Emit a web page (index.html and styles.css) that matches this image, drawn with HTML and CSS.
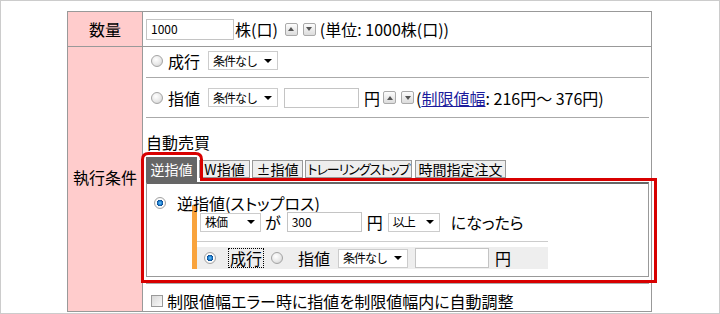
FILE: index.html
```html
<!DOCTYPE html>
<html lang="ja">
<head>
<meta charset="UTF-8">
<title>注文入力</title>
<link rel="stylesheet" href="styles.css">
</head>
<body>
<div class="frame">
    <div class="order">
        <div class="head head-qty">数量</div>
        <div class="cell cell-qty">
            <span class="text-box w-qty">1000</span>
            <span class="unit">株(口)</span>
            <span class="spin spin-up"></span>
            <span class="spin spin-down"></span>
            <span class="note">(単位: 1000株(口))</span>
        </div>

        <div class="head head-cond">執行条件</div>
        <div class="cell cell-cond">
            <div class="sub sub-market">
                <span class="radio"></span>
                <span class="lbl">成行</span>
                <span class="select w-cond">条件なし</span>
            </div>
            <div class="sub sub-limit">
                <span class="radio"></span>
                <span class="lbl">指値</span>
                <span class="select w-cond">条件なし</span>
                <span class="text-box w-price"></span>
                <span class="yen">円</span>
                <span class="spin spin-up"></span>
                <span class="spin spin-down"></span>
                <span class="note">(<a href="#" class="link">制限値幅</a>: 216円～ 376円)</span>
            </div>
            <div class="sub sub-auto">
                <div class="auto-title">自動売買</div>
                <div class="tabs">
                    <span class="tab on">逆指値</span>
                    <span class="tab t-w">W指値</span>
                    <span class="tab t-pm">±指値</span>
                    <span class="tab t-trail">トレーリングストップ</span>
                    <span class="tab t-time">時間指定注文</span>
                </div>
                <div class="panel">
                    <div class="stop-head">
                        <span class="radio checked"></span>
                        <span class="lbl">逆指値(ストップロス)</span>
                    </div>
                    <div class="stop-body">
                        <div class="stop-row trigger">
                            <span class="select w-base">株価</span>
                            <span class="ga">が</span>
                            <span class="text-box w-trig">300</span>
                            <span class="yen">円</span>
                            <span class="select w-cmp">以上</span>
                            <span class="then">になったら</span>
                        </div>
                        <div class="stop-row exec">
                            <span class="radio checked"></span>
                            <span class="lbl focus">成行</span>
                            <span class="radio"></span>
                            <span class="lbl">指値</span>
                            <span class="select w-cond">条件なし</span>
                            <span class="text-box w-price"></span>
                            <span class="yen">円</span>
                        </div>
                    </div>
                </div>
            </div>
            <div class="sub sub-adjust">
                <span class="check"></span>
                <span class="lbl">制限値幅エラー時に指値を制限値幅内に自動調整</span>
            </div>
        </div>
    </div>

    <!-- 注目枠 -->
    <svg class="mark" width="720" height="314" viewBox="0 0 720 314">
        <path d="M141.5 280.5 L141.5 158.5 Q141.5 152.5 147.5 152.5 L194.5 152.5 Q200.5 152.5 200.5 158.5 L200.5 178.5 L654.5 178.5 L654.5 280.5 Z" fill="none" stroke="#d80000" stroke-width="3"/>
    </svg>
</div>
</body>
</html>
```

FILE: styles.css
```css
*{
    margin:0;
    padding:0;
    box-sizing:border-box;
}
body{
    font-family:"Noto Sans CJK JP","Liberation Sans",sans-serif;
    font-size:16px;
    line-height:18px;
    font-feature-settings:"palt";
    color:#000;
    background:#fff;
}
.frame{
    position:relative;
    width:720px;
    height:314px;
    border:1px solid #ccc;
    padding:10px 0 0 66px;
}
.order{
    display:grid;
    grid-template-columns:75px 1fr;
    width:585px;
    border:1px solid #999;
}
.head{
    background:#fcc;
    border-right:1px solid #999;
    display:flex;
    align-items:center;
    justify-content:center;
}
.head-cond,.cell-cond{
    border-top:1px solid #999;
}
.head-cond{
    padding-bottom:5px;
}
.cell-qty{
    height:34px;
    display:flex;
    align-items:center;
    padding-left:3px;
}
.cell-cond{
    padding:0 2px 0 3px;
}
.sub{
    display:flex;
    align-items:center;
    border-bottom:1px solid #aaa;
    padding-left:5px;
    white-space:nowrap;
}
.sub-market{
    height:31px;
    padding-bottom:3px;
}
.sub-limit{
    height:40px;
}
.sub-auto{
    display:block;
    height:166px;
    padding:14px 0 0 0;
}
.sub-adjust{
    height:27px;
    padding-top:6px;
    border-bottom:none;
}

/* 部品 */
.text-box{
    display:inline-flex;
    align-items:center;
    height:21px;
    border:1px solid #c4c4c4;
    background:#fff;
    font-size:12px;
    padding-left:4px;
}
.w-qty{width:88px;}
.w-price{width:75px;height:20px;}
.w-trig{width:75px;height:20px;}
.select{
    display:inline-flex;
    align-items:center;
    justify-content:space-between;
    height:19px;
    border:1px solid #ccc;
    background:#fff;
    font-size:12px;
    font-feature-settings:normal;
    letter-spacing:-1px;
    padding:0 5px 0 4px;
}
.select::after{
    content:"";
    border-left:4px solid transparent;
    border-right:4px solid transparent;
    border-top:4px solid #000;
}
.w-cond{width:70px;}
.w-base{width:61px;}
.w-cmp{width:52px;}
.radio{
    display:inline-block;
    width:12px;
    height:12px;
    border-radius:50%;
    border:1px solid #a4a4a4;
    background:radial-gradient(circle at 40% 35%,#fff 0,#e8e8e8 55%,#c8c8c8 100%);
    flex:none;
}
.radio.checked{
    background:radial-gradient(circle at 50% 50%,#6cf 0,#1a74c8 30%,#0a4a8c 42%,#fff 48%,#e4e4e4 100%);
}
.check{
    display:inline-block;
    width:12px;
    height:12px;
    border:1px solid #9a9a9a;
    background:linear-gradient(135deg,#d8d8d8,#fafafa);
    flex:none;
}
.spin{
    display:inline-flex;
    align-items:center;
    justify-content:center;
    width:13px;
    height:13px;
    border:1px solid #aaa;
    border-radius:2px;
    background:linear-gradient(#fdfdfd,#dcdcdc);
    flex:none;
}
.spin::after{
    content:"";
    border-left:3px solid transparent;
    border-right:3px solid transparent;
}
.spin-up::after{border-bottom:4px solid #555;}
.spin-down::after{border-top:4px solid #555;}
.link{
    color:#1c1c9c;
}

/* 数量行 */
.cell-qty .unit{margin-left:1px;}
.cell-qty .spin-up{margin-left:7px;}
.cell-qty .spin-down{margin-left:5px;}
.cell-qty .note{margin-left:4px;}

/* 成行・指値 */
.sub .radio{margin-right:5px;}
.sub .lbl + .select{margin-left:8px;}
.sub-limit .w-price{margin-left:6px;}
.sub-limit .yen{margin-left:5px;}
.sub-limit .spin-up{margin-left:3px;}
.sub-limit .spin-down{margin-left:5px;}
.sub-limit .note{margin-left:2px;}
.sub-adjust .check{margin-right:4px;}

/* 自動売買 */
.auto-title{
    line-height:20px;
    margin-bottom:5px;
}
.tabs{
    display:flex;
    align-items:flex-start;
    gap:2px;
    font-size:14px;
    white-space:nowrap;
}
.tab{
    height:18px;
    margin-top:3px;
    border:1px solid #999;
    background:#eee;
    line-height:16px;
    text-align:center;
}
.tab.on{
    height:25px;
    margin-top:0;
    border:none;
    background:#666;
    color:#fff;
    line-height:24px;
    width:51px;
}
.t-w,.t-pm{width:51px;}
.t-trail{width:107px;font-size:13px;letter-spacing:-1px;overflow:hidden;}
.t-time{width:91px;margin-left:1px;}
.panel{
    height:95px;
    border:1px solid #999;
    border-top:2px solid #666;
    padding-top:8px;
}
.stop-head{
    display:flex;
    align-items:center;
    height:21px;
    padding-left:7px;
}
.stop-head .radio{margin-right:11px;}
.stop-body{
    margin:-8px 0 0 45px;
    width:356px;
    border-left:5px solid #f9a33c;
}
.stop-row{
    display:flex;
    align-items:center;
    white-space:nowrap;
}
.trigger{
    height:37px;
    padding:0 0 2px 3px;
    border-bottom:1px solid #ccc;
}
.trigger .ga{margin-left:4px;}
.trigger .w-trig{margin-left:6px;}
.trigger .yen{margin-left:5px;}
.trigger .w-cmp{margin-left:5px;}
.trigger .then{margin-left:11px;}
.exec{
    height:22px;
    margin-top:5px;
    background:#eee;
    padding-left:7px;
}
.exec .focus{
    margin-left:8px;
    outline:1px dotted #000;
    padding:0 1px;
}
.exec .focus + .radio{margin-left:8px;}
.exec .lbl:not(.focus){margin-left:10px;}
.exec .select{margin-left:5px;}
.exec .w-price{margin-left:7px;width:74px;}
.exec .yen{margin-left:6px;}

/* 注目枠 */
.mark{
    position:absolute;
    left:0;
    top:0;
    pointer-events:none;
}
```
